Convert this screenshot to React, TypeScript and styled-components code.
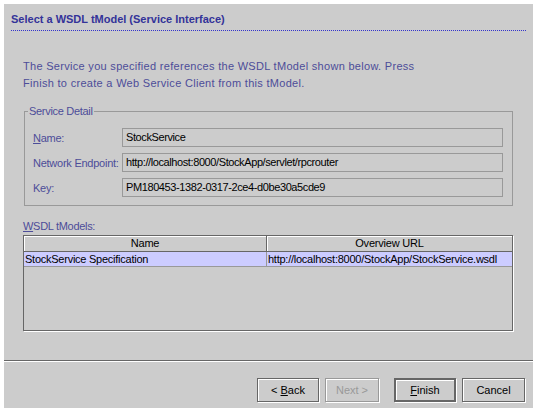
import React from "react";
import styled, { createGlobalStyle } from "styled-components";

const Global = createGlobalStyle`
  html, body { margin: 0; padding: 0; background: #ffffff; }
  body { font-family: "Liberation Sans", Arial, sans-serif; font-size: 11px; }
`;

const Dialog = styled.div`
  margin: 4px;
  width: 529px;
  height: 404px;
  background: #cccccc;
  display: flex;
  flex-direction: column;
`;

const Header = styled.div`
  padding: 7px 7px 0 7px;
`;

const Title = styled.div`
  font-weight: bold;
  font-size: 11px;
  line-height: 16px;
  color: #333399;
  padding-bottom: 3px;
  border-bottom: 1px dotted #3333cc;
`;

const Content = styled.div`
  padding: 0 20px 0 19px;
  display: flex;
  flex-direction: column;
`;

const Intro = styled.p`
  margin: 27px 0 0 0;
  width: 405px;
  font-size: 11px;
  letter-spacing: 0.3px;
  line-height: 17px;
  color: #4d4d99;
`;

const GroupBox = styled.div`
  position: relative;
  margin: 19px 0 0 1px;
  border: 1px solid #999999;
  padding: 16px 9px 8px 8px;
  display: flex;
  flex-direction: column;
  gap: 6px;
`;

const Legend = styled.span`
  position: absolute;
  top: -8px;
  left: 3px;
  padding: 0 1px;
  background: #cccccc;
  color: #4d4d99;
  letter-spacing: -0.3px;
  line-height: 14px;
`;

const FieldRow = styled.div`
  display: flex;
  align-items: center;
`;

const FieldLabel = styled.span`
  width: 89px;
  color: #4d4d99;
  letter-spacing: -0.25px;
  white-space: nowrap;
`;

const Field = styled.div`
  flex: 1;
  height: 17px;
  line-height: 17px;
  border: 1px solid #999999;
  padding-left: 3px;
  color: #000000;
  letter-spacing: -0.4px;
  white-space: nowrap;
  overflow: hidden;
`;

const Mnemonic = styled.span`
  text-decoration: underline;
`;

const TableLabel = styled.div`
  margin: 13px 0 2px 0;
  line-height: 14px;
  letter-spacing: -0.3px;
  color: #4d4d99;
`;

const Table = styled.div`
  height: 94px;
  border: 1px solid #666666;
  box-shadow: 1px 1px 0 #ffffff;
  display: flex;
  flex-direction: column;
`;

const HeaderRow = styled.div`
  display: grid;
  grid-template-columns: 243px 1fr;
  height: 15px;
  border-bottom: 1px solid #666666;
`;

const HeaderCell = styled.div<{ $last?: boolean }>`
  text-align: center;
  line-height: 15px;
  color: #000000;
  letter-spacing: -0.2px;
  border-right: ${(p) => (p.$last ? "none" : "1px solid #666666")};
  box-shadow: inset 1px 1px 0 #ffffff;
`;

const DataRow = styled.div<{ $selected?: boolean }>`
  display: grid;
  grid-template-columns: 243px 1fr;
  height: 14px;
  background: ${(p) => (p.$selected ? "#ccccff" : "transparent")};
  border-bottom: 1px solid #999999;
`;

const DataCell = styled.div<{ $last?: boolean }>`
  line-height: 14px;
  padding-left: 1px;
  color: #000000;
  letter-spacing: -0.25px;
  white-space: nowrap;
  overflow: hidden;
  border-right: ${(p) => (p.$last ? "none" : "1px solid #999999")};
`;

const Spacer = styled.div`
  flex: 1;
`;

const Footer = styled.div`
  border-top: 1px solid #666666;
  box-shadow: inset 0 1px 0 #ffffff;
  padding: 17px 8px 6px 8px;
  display: flex;
  justify-content: flex-end;
`;

const Button = styled.button<{ $default?: boolean; $gap: number; $w: number }>`
  box-sizing: border-box;
  width: ${(p) => p.$w}px;
  height: 24px;
  margin-left: ${(p) => p.$gap}px;
  padding: 0;
  font-family: "Liberation Sans", Arial, sans-serif;
  font-size: 11px;
  color: #000000;
  background: #cccccc;
  border: ${(p) => (p.$default ? "2px solid #666666" : "1px solid #666666")};
  box-shadow: inset 1px 1px 0 #ffffff, 1px 1px 0 #ffffff;
  &:disabled {
    color: #999999;
    border-color: #999999;
  }
`;

export default function App() {
  return (
    <>
      <Global />
      <Dialog>
        <Header>
          <Title>Select a WSDL tModel (Service Interface)</Title>
        </Header>
        <Content>
          <Intro>
            The Service you specified references the WSDL tModel shown below. Press
            Finish to create a Web Service Client from this tModel.
          </Intro>
          <GroupBox>
            <Legend>Service Detail</Legend>
            <FieldRow>
              <FieldLabel>
                <Mnemonic>N</Mnemonic>ame:
              </FieldLabel>
              <Field>StockService</Field>
            </FieldRow>
            <FieldRow>
              <FieldLabel>Network Endpoint:</FieldLabel>
              <Field>http://localhost:8000/StockApp/servlet/rpcrouter</Field>
            </FieldRow>
            <FieldRow>
              <FieldLabel>Key:</FieldLabel>
              <Field>PM180453-1382-0317-2ce4-d0be30a5cde9</Field>
            </FieldRow>
          </GroupBox>
          <TableLabel>
            <Mnemonic>W</Mnemonic>SDL tModels:
          </TableLabel>
          <Table>
            <HeaderRow>
              <HeaderCell>Name</HeaderCell>
              <HeaderCell $last>Overview URL</HeaderCell>
            </HeaderRow>
            <DataRow $selected>
              <DataCell>StockService Specification</DataCell>
              <DataCell $last>http://localhost:8000/StockApp/StockService.wsdl</DataCell>
            </DataRow>
          </Table>
        </Content>
        <Spacer />
        <Footer>
          <Button $w={62} $gap={0}>
            &lt; <Mnemonic>B</Mnemonic>ack
          </Button>
          <Button $w={54} $gap={6} disabled>
            Next &gt;
          </Button>
          <Button $w={62} $gap={15} $default>
            <Mnemonic>F</Mnemonic>inish
          </Button>
          <Button $w={63} $gap={6}>
            Cancel
          </Button>
        </Footer>
      </Dialog>
    </>
  );
}
